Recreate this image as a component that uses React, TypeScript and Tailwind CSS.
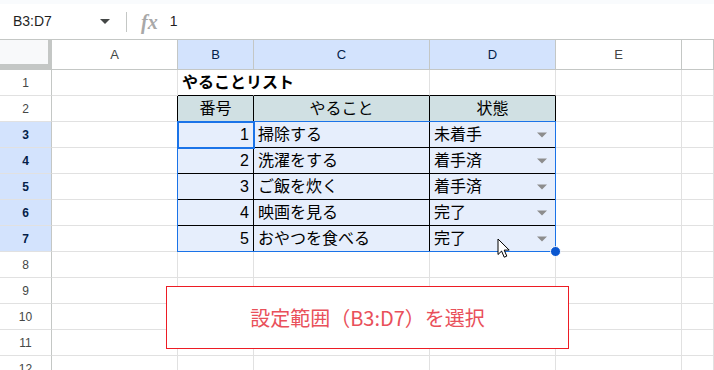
import React from 'react';

const font = "font-['Liberation_Sans','Noto_Sans_CJK_JP',sans-serif]";

const colLetters = ['', 'A', 'B', 'C', 'D', 'E', ''];
const selectedCols = [2, 3, 4];

const todos = [
  { no: 1, task: '掃除する', status: '未着手' },
  { no: 2, task: '洗濯をする', status: '着手済' },
  { no: 3, task: 'ご飯を炊く', status: '着手済' },
  { no: 4, task: '映画を見る', status: '完了' },
  { no: 5, task: 'おやつを食べる', status: '完了' },
];

function DropArrow() {
  return (
    <svg width="10" height="6" viewBox="0 0 10 6" className="shrink-0">
      <path d="M0 0.5h10L5 5.5z" fill="#8d8d8d" />
    </svg>
  );
}

function cellContent(r: number, c: number) {
  if (r === 1 && c === 2) {
    return <span className="pl-[4px] font-bold text-[16px] whitespace-nowrap text-black">やることリスト</span>;
  }
  if (r === 2 && c >= 2 && c <= 4) {
    const label = ['番号', 'やること', '状態'][c - 2];
    return <span className="w-full text-center text-[16px] text-black">{label}</span>;
  }
  if (r >= 3 && r <= 7) {
    const t = todos[r - 3];
    if (c === 2) return <span className="w-full text-right pr-[4px] text-[16px] text-black">{t.no}</span>;
    if (c === 3) return <span className="pl-[4px] text-[16px] text-black whitespace-nowrap">{t.task}</span>;
    if (c === 4)
      return (
        <div className="flex w-full items-center justify-between pl-[4px] pr-[8px]">
          <span className="text-[16px] text-black">{t.status}</span>
          <DropArrow />
        </div>
      );
  }
  return null;
}

function Cell({ r, c }: { r: number; c: number }) {
  const inTable = c >= 2 && c <= 4;
  const blackRight = (inTable || c === 1) && r >= 2 && r <= 7;
  const blackBottom = inTable && r >= 1 && r <= 7;
  // title in B1 spills over into C1
  const spill = r === 1 && c === 2;
  let bg = 'bg-white';
  if (inTable && r === 2) bg = 'bg-[#d0e0e3]';
  if (inTable && r >= 3 && r <= 7) bg = 'bg-[#e6eefc]';

  if (c === 0) {
    const sel = r >= 3 && r <= 7;
    return (
      <div
        className={`h-[26px] flex items-center justify-center border-r border-r-[#c4c7c5] border-b border-b-[#e1e1e1] text-[12px] ${
          sel ? 'bg-[#d3e3fd] text-[#041e49] font-bold' : 'bg-white text-[#444746]'
        }`}
      >
        {r}
      </div>
    );
  }

  return (
    <div
      className={`h-[26px] flex items-center overflow-visible border-r border-b ${bg} ${
        spill ? 'relative z-10 border-r-transparent' : blackRight ? 'border-r-black' : 'border-r-[#e1e1e1]'
      } ${blackBottom ? 'border-b-black' : 'border-b-[#e1e1e1]'}`}
    >
      {cellContent(r, c)}
    </div>
  );
}

export default function App() {
  const rows = Array.from({ length: 12 }, (_, i) => i + 1);

  return (
    <div className={`w-[714px] h-[370px] overflow-hidden bg-white ${font}`}>
      {/* top strip */}
      <div className="h-[4px] bg-[#f9fbfd]" />

      {/* formula bar */}
      <div className="h-[36px] flex items-center border-b border-[#c4c7c5] bg-white">
        <div className="w-[126px] flex items-center justify-between pl-[13px] pr-[16px]">
          <span className="text-[14px] text-[#1f1f1f]">B3:D7</span>
          <svg width="10" height="5" viewBox="0 0 10 5">
            <path d="M0 0h10L5 5z" fill="#444746" />
          </svg>
        </div>
        <div className="w-px h-[20px] bg-[#c4c7c5]" />
        <span className="ml-[14px] font-['Liberation_Serif',serif] italic font-bold text-[20px] text-[#a8a8a8] leading-none">fx</span>
        <span className="ml-[12px] text-[14px] text-[#1f1f1f]">1</span>
      </div>

      {/* sheet */}
      <div className="relative">
        <div className="grid grid-cols-[52px_126px_76px_176px_126px_126px_1fr]">
          {/* column headers */}
          {colLetters.map((l, c) =>
            c === 0 ? (
              <div key="corner" className="h-[30px] bg-[#f8f9fa] border-r-[4px] border-b-[6px] border-[#c4c7c5]" />
            ) : (
              <div
                key={`h${c}`}
                className={`h-[30px] flex items-center justify-center text-[13px] border-r border-b border-[#c4c7c5] ${
                  selectedCols.includes(c) ? 'bg-[#d3e3fd] text-[#041e49]' : 'bg-white text-[#444746]'
                }`}
              >
                {l}
              </div>
            )
          )}
          {rows.map((r) =>
            colLetters.map((_, c) => <Cell key={`${r}-${c}`} r={r} c={c} />)
          )}
        </div>

        {/* selection B3:D7 */}
        <div className="absolute z-20 left-[177px] top-[81px] w-[379px] h-[131px] border border-[#1a73e8] pointer-events-none" />
        <div className="absolute z-20 left-[177px] top-[81px] w-[78px] h-[28px] border-2 border-[#1a73e8] pointer-events-none" />
        <div className="absolute z-20 left-[550px] top-[206px] w-[11px] h-[11px] rounded-full bg-[#0b57d0] border border-white" />

        {/* mouse cursor */}
        <svg className="absolute z-20 left-[497px] top-[198px]" width="14" height="21" viewBox="0 0 14 21">
          <path
            d="M1 1v15.5l3.6-3.4 2.6 6.1 2.6-1.1-2.6-6h5z"
            fill="#fff"
            stroke="#000"
            strokeWidth="1"
            strokeLinejoin="round"
          />
        </svg>

        {/* callout */}
        <div className="absolute z-20 left-[166px] top-[246px] w-[403px] h-[63px] bg-white border border-[#ed1c24] flex items-center justify-center">
          <span className="font-['Noto_Sans_CJK_JP',sans-serif] text-[20px] text-[#e9505a]">設定範囲（B3:D7）を選択</span>
        </div>
      </div>
    </div>
  );
}
